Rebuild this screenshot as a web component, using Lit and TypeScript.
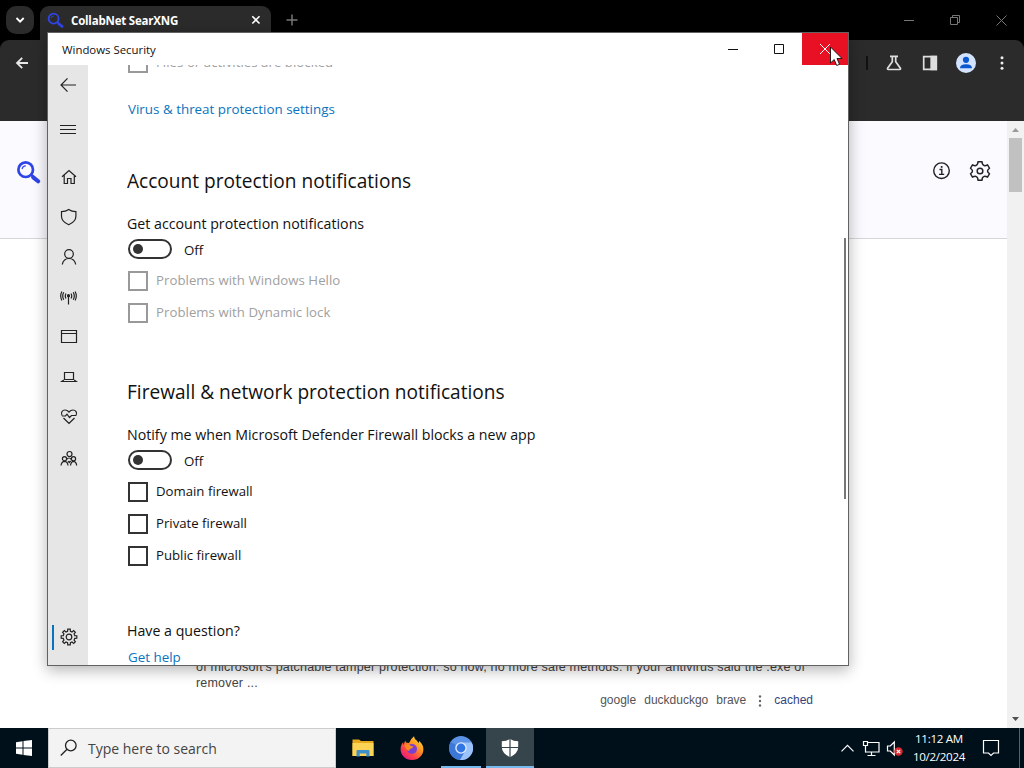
import { LitElement, html, css, svg, TemplateResult } from "lit";
import { property, customElement } from "lit/decorators.js";
import { classMap } from "lit/directives/class-map.js";

const UI_FONT = css`"Open Sans", "Noto Sans", sans-serif`;

const magnifier = html`
    <svg viewBox="0 0 24 24" fill="none">
        <circle cx="9.3" cy="9.3" r="7" stroke="#2f45e6" stroke-width="2.6" />
        <path d="M5.8 8.8a3.8 3.8 0 0 1 3.6-3.2" stroke="#2f45e6" stroke-width="1.1" />
        <path d="M14.6 14.2l2 1.8" stroke="#2f45e6" stroke-width="2.4" />
        <path d="M16.6 16.6l4.6 3.800" stroke="#2f45e6" stroke-width="4" stroke-linecap="round" />
    </svg>
`;

@customElement("browser-window")
export class BrowserWindow extends LitElement {

    static styles = css`
        :host {
            display: flex;
            flex-direction: column;
            height: 728px;
            background: #ffffff;
            font-family: ${UI_FONT};
            overflow: hidden;
        }

        svg {
            display: block;
        }

        .tabs {
            display: flex;
            height: 40px;
            background: #000000;
            box-sizing: border-box;
            padding: 6px 0 0 6px;
        }

        .tab-search {
            width: 28px;
            height: 28px;
            border-radius: 10px;
            background: #2b2b2b;
            margin-right: 6px;
        }

        .tab {
            display: flex;
            align-items: center;
            box-sizing: border-box;
            width: 231px;
            height: 34px;
            padding: 0 10px 6px 7px;
            border-radius: 9px 9px 0 0;
            background: #2b2b2b;
            color: #ffffff;
            font-size: 11.5px;
            font-weight: 700;
            letter-spacing: -0.2px;
        }

        .tab .favicon {
            width: 17px;
            height: 17px;
            margin-right: 7px;
        }

        .tab span {
            flex: 1;
        }

        .new-tab {
            margin: 8px 0 0 15px;
        }

        .frame-buttons {
            display: flex;
            margin-left: auto;
        }

        .toolbar {
            display: flex;
            align-items: center;
            box-sizing: border-box;
            height: 81px;
            padding: 0 12px 35px 12px;
            background: #2b2b2b;
            border-radius: 9px 9px 0 0;
        }

        .toolbar-wrap {
            background: #000000;
        }

        .toolbar-right {
            display: flex;
            align-items: center;
            margin-left: auto;
            gap: 16px;
        }

        .divider {
            width: 2px;
            height: 14px;
            background: #111111;
        }

        .viewport {
            display: flex;
            flex: 1;
            min-height: 0;
        }

        .page {
            flex: 1;
            display: flex;
            flex-direction: column;
        }

        .page-header {
            display: flex;
            align-items: center;
            box-sizing: border-box;
            height: 118px;
            padding: 0 16px 18px 16px;
            background: #fbfaff;
            border-bottom: 1px solid #d5d5da;
        }

        .page-header .logo {
            width: 25px;
            height: 25px;
            margin-top: 3px;
        }

        .page-links {
            display: flex;
            margin-left: auto;
            gap: 16px;
        }

        .result {
            margin: auto 194px 20px 196px;
            font-family: "Liberation Sans", Arial, sans-serif;
            font-size: 12.5px;
            line-height: 16px;
            color: #444444;
        }

        .result p {
            margin: 0;
            white-space: nowrap;
            letter-spacing: 0.195px;
        }

        .engines {
            display: flex;
            justify-content: flex-end;
            align-items: center;
            font-size: 12px;
            gap: 8px;
            margin-top: 1px;
            color: #545454;
        }

        .engines svg {
            margin: 2px 3px 0 3px;
        }

        .engines a {
            color: #334480;
        }

        .scrollbar {
            display: flex;
            flex-direction: column;
            align-items: center;
            width: 17px;
            background: #f1f1f1;
        }

        .scrollbar svg {
            height: 17px;
        }

        .thumb {
            width: 13px;
            height: 54px;
            background: #c1c1c1;
        }

        .scrollbar svg:last-child {
            margin-top: auto;
        }
    `

    render() {
        return html`
            <div class="tabs">
                <div class="tab-search">
                    <svg width="28" height="28" fill="none" stroke="#fff" stroke-width="1.9"><path d="M10.5 12l3.6 3.6 3.6-3.6" /></svg>
                </div>
                <div class="tab">
                    <div class="favicon">${magnifier}</div>
                    <span>CollabNet SearXNG</span>
                    <svg width="10" height="10" stroke="#fff" stroke-width="1.6"><path d="M1.3 1.3l7.2 7.2M8.5 1.3L1.3 8.5" /></svg>
                </div>
                <svg class="new-tab" width="12" height="12" stroke="#777" stroke-width="1.5"><path d="M6 .5v11M.5 6h11" /></svg>
                <div class="frame-buttons">
                    <svg width="138" height="28" fill="none" stroke="#777" stroke-width="1">
                        <path d="M18 14.5h10" />
                        <path d="M64.5 11.5h7v7h-7zM66.5 11.5v-2h7v7h-2" />
                        <path d="M110.5 9.5l10 10M120.5 9.5l-10 10" />
                    </svg>
                </div>
            </div>
            <div class="toolbar-wrap">
                <div class="toolbar">
                    <svg width="20" height="20" fill="none" stroke="#e8e8e8" stroke-width="1.8"><path d="M16 10H5M10.2 4.8L5 10l5.2 5.2" /></svg>
                    <div class="toolbar-right">
                        <div class="divider"></div>
                        <svg width="20" height="20" fill="none" stroke="#dedede" stroke-width="1.7">
                            <path d="M6 3.3h8M8.3 3.5v5.2L3.6 15.2q-.5 1.2.8 1.3h11.2q1.300-.1.8-1.3L11.7 8.7V3.5" />
                        </svg>
                        <svg width="20" height="20" fill="none" stroke="#dedede" stroke-width="1.7">
                            <path d="M3.7 3.7h12.6v12.6H3.7z" />
                            <path d="M11.2 3.5h5v13h-5z" fill="#dedede" />
                        </svg>
                        <svg width="20" height="20">
                            <circle cx="10" cy="10" r="10" fill="#d3e3fd" />
                            <circle cx="10" cy="6.8" r="3.1" fill="#0b57d0" />
                            <path d="M4 15.3q0-4 6-4t6 4z" fill="#0b57d0" />
                        </svg>
                        <svg width="20" height="20" fill="#eee">
                            <circle cx="10" cy="4.8" r="1.5" /><circle cx="10" cy="10" r="1.5" /><circle cx="10" cy="15.2" r="1.5" />
                        </svg>
                    </div>
                </div>
            </div>
            <div class="viewport">
                <div class="page">
                    <div class="page-header">
                        <div class="logo">${magnifier}</div>
                        <div class="page-links">
                            <svg width="22" height="22" fill="none" stroke="#222" stroke-width="1.4">
                                <circle cx="10.5" cy="10.7" r="7.8" />
                                <path d="M8.5 9.5h2.3v4.7M8 14.4h5.200" /><path d="M9.8 6.9h1.7" stroke-width="1.8" />
                            </svg>
                            <svg width="22" height="22" viewBox="0 0 24 24" fill="none" stroke="#222" stroke-width="1.6" stroke-linejoin="round">
                                <path d="M9.8 2h4.4q0 3.200 2.300 4.100 1.600.3 3.700-.9l2.200 3.800q-2.200 1.600-2.200 3t2.200 3l-2.200 3.800q-2.100-1.200-3.700-.9-2.300.900-2.300 4.100H9.800q0-3.200-2.300-4.100-1.600-.3-3.700.9L1.600 15q2.200-1.600 2.200-3T1.600 9l2.200-3.800q2.100 1.200 3.700.9Q9.800 5.200 9.800 2z" />
                                <circle cx="12" cy="12" r="3.1" />
                            </svg>
                        </div>
                    </div>
                    <div class="result">
                        <p>of microsoft's patchable tamper protection. so now, no more safe methods. if your antivirus said the .exe of</p>
                        <p>remover ...</p>
                        <div class="engines">
                            <span>google</span><span>duckduckgo</span><span>brave</span>
                            <svg width="6" height="14" fill="#666"><circle cx="3" cy="2.5" r="1.2" /><circle cx="3" cy="7" r="1.2" /><circle cx="3" cy="11.5" r="1.2" /></svg>
                            <a>cached</a>
                        </div>
                    </div>
                </div>
                <div class="scrollbar">
                    <svg width="17" height="17" fill="#9a9a9a"><path d="M5 11l3.500-4 3.500 4z" /></svg>
                    <div class="thumb"></div>
                    <svg width="17" height="17" fill="#505050"><path d="M5 6l3.500 4L12 6z" /></svg>
                </div>
            </div>
        `
    }

}

// eight-toothed outline, one tooth every 45 degrees
const GEAR = Array.from({ length: 8 }, (_, i) => {
    const at = (deg: number, r: number) => {
        const a = ((i * 45 + deg) * Math.PI) / 180;
        return `${(10 + r * Math.cos(a)).toFixed(2)} ${(10 + r * Math.sin(a)).toFixed(2)}`;
    };
    return `${at(-14, 5.9)} L${at(-9, 7.9)} L${at(9, 7.9)} L${at(14, 5.9)}`;
}).join(" L");

const NAV_ICONS: Record<string, TemplateResult> = {
    back: svg`<path d="M18 10H3M9.500 3.300L3 10l6.500 6.700" />`,
    menu: svg`<path d="M2 6.500h16M2 10.500h16M2 14.500h16" />`,
    home: svg`<path d="M3 9.800L10 3.500l7 6.300M5.200 8v8.500h3.300v-5h3.500v5h3.300V8" />`,
    shield: svg`<path d="M9.700 2.500q3 2.200 7.200 2.200v4.500q0 5.300-7.200 8.500-7.200-3.200-7.200-8.500V4.700q4.200 0 7.200-2.200z" />`,
    account: svg`<circle cx="10" cy="7" r="4.300" /><path d="M3.300 17.500q1.200-6 6.700-6t6.700 6" />`,
    network: svg`<path d="M9.500 9v8.500M7 6.500q-1.500 2.700 0 5M12 6.500q1.500 2.700 0 5M4.800 5.300q-2.200 3.700 0 7.500M14.200 5.300q2.200 3.700 0 7.500M2.900 4.500q-2.400 4.500 0 9M16.100 4.500q2.400 4.500 0 9" /><circle cx="9.500" cy="8.700" r="1" fill="#222" />`,
    app: svg`<path d="M2.500 3.500h15v12h-15zM2.500 6.500h15" />`,
    device: svg`<path d="M5.500 5.500h9v7h-9zM4.800 13l-2 1.500h14.400l-2-1.500" />`,
    health: svg`<path d="M3 8.500C1.500 5.300 3.500 3 6 3q2.200 0 4 2 1.800-2 4-2c2.500 0 4.700 2.300 3 5.500M4.500 11l5.500 5.500 5.500-5.500M3 9h3.500L8 7.200l2.500 3.300L12.500 8.500h4.500" />`,
    family: svg`<circle cx="10.500" cy="5" r="2.500" /><circle cx="5.500" cy="9.700" r="2.100" /><circle cx="14.500" cy="9.700" r="2.100" /><path d="M2 16.500q.6-4.200 3.500-4.200 3.200.2 3.500 4.200M11.500 16.500q.6-4.200 3-4.200 2.700.2 3.200 4.200M7.500 10.500q2.500-3 5 0M9 12l1.200 1.500 1.500-1.500" />`,
    settings: svg`<path d=${`M${GEAR}Z`} /><circle cx="10" cy="10" r="2.800" />`,
};

@customElement("nav-item")
export class NavItem extends LitElement {

    static styles = css`
        :host {
            display: flex;
            align-items: center;
            justify-content: center;
            flex: none;
            height: 40px;
        }

        .item {
            display: flex;
            align-items: center;
            box-sizing: border-box;
            width: 40px;
            height: 25px;
            padding-left: 11px;
        }

        .item.wide {
            padding-left: 10px;
        }

        .item.selected {
            border-left: 2px solid #0a73be;
            width: 36px;
            margin-left: 4px;
            padding-left: 5px;
        }
    `

    @property()
    icon: string = "home"

    @property({ type: Boolean })
    selected: boolean = false

    render() {
        const wide = this.icon === "back" || this.icon === "menu";
        return html`
            <div class=${classMap({ item: true, wide, selected: this.selected })}>
                <svg width="20" height="20" fill="none" stroke="#222" stroke-width="1.2">${NAV_ICONS[this.icon]}</svg>
            </div>
        `
    }

}

@customElement("toggle-switch")
export class ToggleSwitch extends LitElement {

    static styles = css`
        :host {
            display: flex;
            align-items: center;
            height: 24px;
            margin: 1px 0 4px 0;
            font-size: 13.3px;
        }

        .track {
            display: flex;
            align-items: center;
            box-sizing: border-box;
            width: 44px;
            height: 20px;
            padding-left: 3px;
            border: 2px solid #333333;
            border-radius: 10px;
            margin-right: 12px;
        }

        .knob {
            width: 10px;
            height: 10px;
            border-radius: 50%;
            background: #333333;
        }

        span {
            padding-top: 2px;
        }
    `

    render() {
        return html`<div class="track"><div class="knob"></div></div><span>Off</span>`
    }

}

@customElement("check-option")
export class CheckOption extends LitElement {

    static styles = css`
        :host {
            display: flex;
            align-items: center;
            height: 32px;
            font-size: 13.2px;
        }

        .box {
            box-sizing: border-box;
            width: 20px;
            height: 20px;
            border: 2px solid #333333;
            margin-right: 8px;
        }

        .label {
            padding-bottom: 2px;
        }

        .box.disabled {
            border-color: #999999;
        }

        .label.disabled {
            color: #a0a0a0;
            letter-spacing: 0.05px;
        }
    `

    @property()
    label: string = ""

    @property({ type: Boolean })
    disabled: boolean = false

    render() {
        return html`
            <div class=${classMap({ box: true, disabled: this.disabled })}></div>
            <span class=${classMap({ label: true, disabled: this.disabled })}>${this.label}</span>
        `
    }

}

@customElement("security-window")
export class SecurityWindow extends LitElement {

    static styles = css`
        :host {
            display: flex;
            flex-direction: column;
            box-sizing: border-box;
            width: 802px;
            height: 634px;
            border: 1px solid #626262;
            background: #ffffff;
            box-shadow: 0 4px 14px rgba(0, 0, 0, 0.3);
            font-family: ${UI_FONT};
            color: #111111;
        }

        .titlebar {
            display: flex;
            align-items: center;
            flex: none;
            height: 32px;
            padding-left: 14px;
            font-size: 11.4px;
        }

        .titlebar span {
            flex: 1;
        }

        .caption-button {
            width: 46px;
            height: 32px;
        }

        .caption-button.close {
            background: #e81123;
        }

        .body {
            display: flex;
            flex: 1;
            min-height: 0;
        }

        nav {
            display: flex;
            flex-direction: column;
            width: 40px;
            background: #e6e6e6;
        }

        nav .menu {
            height: 48px;
            margin-bottom: 4px;
        }

        nav .family {
            height: 44px;
        }

        nav .bottom {
            margin: auto 0 8px 0;
        }

        main {
            flex: 1;
            padding-left: 40px;
            overflow: hidden;
        }

        main .peek {
            margin-top: -18px;
        }

        a {
            display: block;
            color: #0a73be;
            font-size: 13.4px;
            line-height: 24px;
        }

        a.settings {
            margin-top: 18px;
        }

        h2 {
            margin: 49px 0 17px -1px;
            font-size: 19.1px;
            font-weight: 400;
            line-height: 28px;
        }

        a + h2 {
            margin-top: 46px;
        }

        p {
            margin: 0 0 0 -1px;
            font-size: 14.2px;
            line-height: 24px;
            white-space: nowrap;
        }

        .question {
            margin: 47px 0 2px -1px;
        }

        .scroll {
            width: 4px;
            padding-top: 173px;
        }

        .scroll-thumb {
            width: 2px;
            height: 261px;
            background: #777777;
        }
    `

    render() {
        return html`
            <div class="titlebar">
                <span>Windows Security</span>
                <svg class="caption-button" fill="none" stroke="#111"><path d="M18 16.5h10" /></svg>
                <svg class="caption-button" fill="none" stroke="#111"><path d="M18.5 11.5h9v9h-9z" /></svg>
                <svg class="caption-button close" fill="none" stroke="#fff"><path d="M18 11l10 10M28 11L18 21" /></svg>
            </div>
            <div class="body">
                <nav>
                    <nav-item icon="back"></nav-item>
                    <nav-item class="menu" icon="menu"></nav-item>
                    ${["home", "shield", "account", "network", "app", "device", "health"].map(
                        (icon) => html`<nav-item icon=${icon}></nav-item>`
                    )}
                    <nav-item class="family" icon="family"></nav-item>
                    <nav-item class="bottom" icon="settings" selected></nav-item>
                </nav>
                <main>
                    <check-option class="peek" label="Files or activities are blocked" disabled></check-option>
                    <a class="settings">Virus &amp; threat protection settings</a>

                    <h2>Account protection notifications</h2>
                    <p>Get account protection notifications</p>
                    <toggle-switch></toggle-switch>
                    <check-option label="Problems with Windows Hello" disabled></check-option>
                    <check-option label="Problems with Dynamic lock" disabled></check-option>

                    <h2>Firewall &amp; network protection notifications</h2>
                    <p>Notify me when Microsoft Defender Firewall blocks a new app</p>
                    <toggle-switch></toggle-switch>
                    <check-option label="Domain firewall"></check-option>
                    <check-option label="Private firewall"></check-option>
                    <check-option label="Public firewall"></check-option>

                    <p class="question">Have a question?</p>
                    <a>Get help</a>
                </main>
                <div class="scroll"><div class="scroll-thumb"></div></div>
            </div>
        `
    }

}

@customElement("task-bar")
export class TaskBar extends LitElement {

    static styles = css`
        :host {
            display: flex;
            height: 40px;
            background: #00101a;
            color: #ffffff;
            font-family: ${UI_FONT};
        }

        svg {
            display: block;
        }

        .search {
            display: flex;
            align-items: center;
            box-sizing: border-box;
            width: 288px;
            padding-left: 11px;
            gap: 11px;
            border: 1px solid #cccccc;
            background: #f3f3f3;
            color: #444444;
            font-size: 14px;
            margin-right: 2px;
        }

        .app {
            display: flex;
            align-items: center;
            justify-content: center;
            box-sizing: border-box;
            width: 49px;
            border-bottom: 2px solid transparent;
            padding-top: 2px;
        }

        .app.running {
            width: 40px;
            margin: 0 5px;
            border-color: #76b9ed;
        }

        .app.active {
            width: 48px;
            background: #36444c;
            border-color: #76b9ed;
        }

        .tray {
            display: flex;
            align-items: center;
            margin-left: auto;
        }

        .clock {
            width: 70px;
            text-align: center;
            font-size: 11.6px;
            line-height: 18px;
            letter-spacing: -0.3px;
            white-space: nowrap;
            padding-bottom: 1px;
        }

        .show-desktop {
            width: 4px;
            height: 40px;
            border-left: 1px solid #55616a;
        }
    `

    render() {
        return html`
            <svg width="48" height="40" fill="#fff">
                <path d="M16 14.2l6.5-.9v6.200H16zM23.5 13.1l8.5-1.2v7.6h-8.5zM16 20.5h6.5v6.2l-6.5-.9zM23.5 20.5H32v7.6l-8.5-1.2z" />
            </svg>
            <div class="search">
                <svg width="17" height="18" fill="none" stroke="#222" stroke-width="1.3"><circle cx="10.8" cy="6.5" r="5.3" /><path d="M7 10.2L.8 16.5" /></svg>
                <span>Type here to search</span>
            </div>
            <div class="app">
                <svg width="24" height="22">
                    <path d="M1.500 2.500h6.500l2 1.500h12.500v15h-21z" fill="#e8a91c" />
                    <path d="M1.500 6h21v13h-21z" fill="#fbd455" />
                    <path d="M5.500 19.500v-5.500q0-1 1-1h11q1 0 1 1v5.500h-3.200v-3h-6.600v3z" fill="#3f8fcb" />
                </svg>
            </div>
            <div class="app">
                <svg width="24" height="24">
                    <defs>
                        <linearGradient id="fox" x1="1" y1="0" x2="0.2" y2="1">
                            <stop offset="0" stop-color="#fff04a" /><stop offset=".4" stop-color="#ff9a1f" /><stop offset=".75" stop-color="#ff3d4d" /><stop offset="1" stop-color="#e3188a" />
                        </linearGradient>
                    </defs>
                    <path d="M12 24C5.3 24 .6 19 .6 13.2c0-3 1.1-5.3 2.5-6.9L3.5 9l1.7-4.5L6 6.5 9 7q2-4.5 5-6.700.3 3 3 4.5l1.5 2.5.7-2.2c3 3 4.2 5 4.2 8.1C23.4 19 18.7 24 12 24z" fill="url(#fox)" />
                    <circle cx="12" cy="13" r="5" fill="#7b3fd3" />
                    <path d="M4.5 9q4-2 6.500 1l2.5.5q-1 2-3 2.2-1.5.5-1.3 2.3-3.5-1-4.7-6z" fill="#ff8b1e" />
                </svg>
            </div>
            <div class="app running">
                <svg width="24" height="24">
                    <circle cx="12" cy="12" r="12" fill="#5b93e6" />
                    <path d="M12 12L1.6 6A12 12 0 0 0 11 24l5.5-9.5z" fill="#3b78d8" />
                    <path d="M12 6.5h10.700A12 12 0 0 1 11 24l5.5-9.5z" fill="#9bc2fa" />
                    <circle cx="12" cy="12" r="5.8" fill="#dce9ff" />
                    <circle cx="12" cy="12" r="4.4" fill="#3276e3" />
                </svg>
            </div>
            <div class="app active">
                <svg width="20" height="20">
                    <path d="M10 1q3.5 2.3 8.2 2.3V9q0 6.3-8.2 10.2Q1.8 15.3 1.8 9V3.3Q6.5 3.3 10 1z" fill="#fff" />
                    <path d="M10 0v20M1 9.5h18" stroke="#36444c" stroke-width="1.2" />
                </svg>
            </div>
            <div class="tray">
                <svg width="70" height="40" fill="none" stroke="#fff" stroke-width="1.2">
                    <path d="M7.5 23.3l6-6 6 6" />
                    <path d="M33.5 14.5H45v9.5H31.5M37.5 24v3M33.5 27.5h8" />
                    <path d="M29.5 13.5h4v4h-4zM31.5 17.5v7" />
                    <path d="M53.5 18h2.8l4-4v13l-4-4h-2.8z" />
                    <circle cx="64.5" cy="23.5" r="4.2" fill="#d8282f" stroke="none" />
                    <path d="M62.8 21.8l3.4 3.4M66.2 21.8l-3.4 3.4" />
                </svg>
                <div class="clock"><div>11:12 AM</div><div>10/2/2024</div></div>
                <svg width="45" height="40" fill="none" stroke="#fff" stroke-width="1.2">
                    <path d="M9.5 12.5h15v12.5h-5l-2.500 2.500-2.500-2.500h-5z" />
                </svg>
                <div class="show-desktop"></div>
            </div>
        `
    }

}

@customElement("app-root")
export class AppRoot extends LitElement {

    static styles = css`
        :host {
            display: flex;
            flex-direction: column;
            position: relative;
            width: 1024px;
            height: 768px;
            overflow: hidden;
        }

        security-window {
            position: absolute;
            left: 47px;
            top: 32px;
        }

        .cursor {
            position: absolute;
            left: 829px;
            top: 46px;
        }
    `

    render() {
        return html`
            <browser-window></browser-window>
            <task-bar></task-bar>
            <security-window></security-window>
            <svg class="cursor" width="14" height="21" fill="#fff" stroke="#111" stroke-width="0.9">
                <path d="M1.5 1v16l3.7-3.5 2.5 6 2.8-1.2-2.5-5.8h5z" />
            </svg>
        `
    }

}
